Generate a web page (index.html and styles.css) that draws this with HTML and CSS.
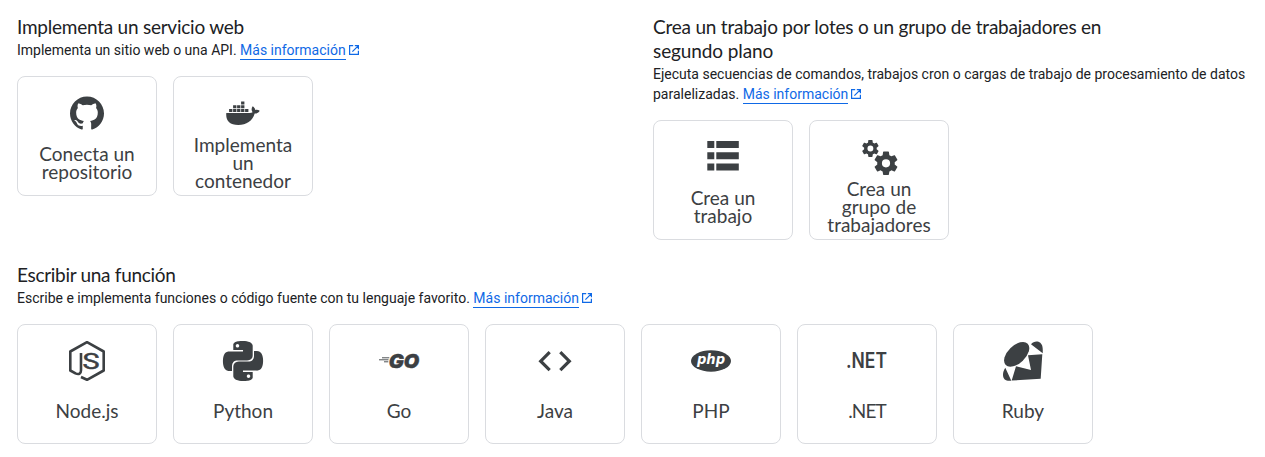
FILE: index.html
```
<!DOCTYPE html>
<html lang="es">
<head>
<meta charset="utf-8">
<title>Cloud Run</title>
<link rel="stylesheet" href="styles.css">
</head>
<body>
<svg class="defs" width="0" height="0">
  <symbol id="open" viewBox="0 0 10 10"><path d="M4.2.6H.6V9.4H9.4V5.8M5.8.6H9.4V4.2M9.2.8 3.4 6.6" fill="none" stroke="currentColor" stroke-width="1.2"/></symbol>
</svg>
<main class="page">
  <div class="columns">
    <section>
      <h2 class="heading"><span class="h-web">Implementa un servicio web</span></h2>
      <p class="text">Implementa un sitio web o una API. <a class="link" href="#">Más información</a><svg class="open"><use href="#open"/></svg></p>
      <div class="cards">
        <div class="card">
          <div class="icon"><svg width="34" height="34" viewBox="0 0 24 24"><path d="M12 .297c-6.63 0-12 5.373-12 12 0 5.303 3.438 9.8 8.205 11.385.6.113.82-.258.82-.577 0-.285-.01-1.04-.015-2.04-3.338.724-4.042-1.61-4.042-1.61C4.422 18.07 3.633 17.7 3.633 17.7c-1.087-.744.084-.729.084-.729 1.205.084 1.838 1.236 1.838 1.236 1.07 1.835 2.809 1.305 3.495.998.108-.776.417-1.305.76-1.605-2.665-.3-5.466-1.332-5.466-5.93 0-1.31.465-2.38 1.235-3.22-.135-.303-.54-1.523.105-3.176 0 0 1.005-.322 3.3 1.23.96-.267 1.98-.399 3-.405 1.02.006 2.04.138 3 .405 2.28-1.552 3.285-1.23 3.285-1.23.645 1.653.24 2.873.12 3.176.765.84 1.23 1.91 1.23 3.22 0 4.61-2.805 5.625-5.475 5.92.42.36.81 1.096.81 2.22 0 1.606-.015 2.896-.015 3.286 0 .315.21.69.825.57C20.565 22.092 24 17.592 24 12.297c0-6.627-5.373-12-12-12"/></svg></div>
          <div class="label">Conecta un<br>repositorio</div>
        </div>
        <div class="card">
          <div class="icon"><svg width="34" height="24" viewBox="0 0 34 24"><path d="M3.1 8h3.300v3h-3.300zM7.1 8h3.300v3h-3.300zM11.1 8h3.300v3h-3.300zM15.1 8h3.300v3h-3.300zM19.1 8h3.300v3h-3.300zM7.1 4.2h3.300v3h-3.300zM11.1 4.2h3.300v3h-3.300zM15.1 4.2h3.300v3h-3.300zM15.1.5h3.300v3h-3.300z"/><path d="M.3 12H23.8c1.2 0 2-.2 2.8-.7-1.5-2-1.2-4.4.1-6 1.5 1 2.3 2.1 2.6 3.7 1.600-.3 3.200-.1 4.400.7-.8 1.900-2.500 2.800-5 2.800C26.400 20 20.500 23.900 12.300 23.900 3.400 23.900-.4 19.500.3 12z"/></svg></div>
          <div class="label">Implementa<br>un<br>contenedor</div>
        </div>
      </div>
    </section>
    <section>
      <h2 class="heading"><span class="h-job">Crea un trabajo por lotes o un grupo de trabajadores en</span><br><span class="h-plan">segundo plano</span></h2>
      <p class="text">Ejecuta secuencias de comandos, trabajos cron o cargas de trabajo de procesamiento de datos paralelizadas. <a class="link" href="#">Más información</a><svg class="open"><use href="#open"/></svg></p>
      <div class="cards">
        <div class="card">
          <div class="icon"><svg width="40" height="40" viewBox="0 0 40 40"><path d="M4.300 4h7v7h-7zM13.300 4h22.500v7H13.300zM4.300 15.300h7v7h-7zM13.300 15.300h22.500v7H13.300zM4.300 26.500h7v7h-7zM13.300 26.500h22.500v7H13.300z"/></svg></div>
          <div class="label">Crea un<br>trabajo</div>
        </div>
        <div class="card">
          <div class="icon"><svg width="40" height="40" viewBox="0 0 40 40"><defs><path id="gear" d="M7.430.980c.040-.320.070-.640.070-.980s-.030-.660-.070-.980l2.110-1.650c.190-.150.240-.420.120-.640l-2-3.460c-.120-.220-.390-.300-.610-.220l-2.490 1c-.520-.400-1.080-.730-1.690-.980l-.380-2.650C2.460-9.820 2.250-10 2-10h-4c-.250 0-.460.180-.490.420l-.380 2.650c-.610.250-1.170.590-1.690.980l-2.490-1c-.230-.090-.490 0-.610.220l-2 3.460c-.130.220-.070.490.120.640l2.110 1.650c-.040.320-.070.650-.070.980s.030.660.070.980l-2.110 1.650c-.190.150-.240.420-.120.640l2 3.460c.120.220.390.300.610.220l2.490-1c.520.400 1.080.730 1.690.980l.380 2.650c.030.240.240.420.490.420h4c.250 0 .460-.180.490-.420l.380-2.650c.610-.250 1.170-.590 1.690-.980l2.490 1c.230.090.490 0 .610-.220l2-3.460c.120-.220.070-.490-.120-.640L7.430.980zM0 3.500A3.500 3.500 0 1 1 0-3.500 3.500 3.500 0 0 1 0 3.500z"/></defs><use href="#gear" transform="translate(11.400 11.500) scale(.84)"/><use href="#gear" transform="translate(27 26.300) scale(1.170)"/></svg></div>
          <div class="label">Crea un<br>grupo de<br>trabajadores</div>
        </div>
      </div>
    </section>
  </div>
  <section>
    <h2 class="heading"><span class="h-fn">Escribir una función</span></h2>
    <p class="text">Escribe e implementa funciones o código fuente con tu lenguaje favorito. <a class="link" href="#">Más información</a><svg class="open"><use href="#open"/></svg></p>
    <div class="cards">
      <div class="card">
        <div class="icon"><svg width="40" height="40" viewBox="0 0 40 40"><path d="M14 36 20 38.800 36.700 29.500V10.500L20 1.200 3.300 10.500V29.500L8.500 32.400C12 34 14 32.500 14 29.300V12" fill="none" stroke="currentColor" stroke-width="2.600" stroke-linejoin="round"/><text class="node-s" x="15.500" y="27.800" textLength="17" lengthAdjust="spacingAndGlyphs">S</text></svg></div>
        <div class="label">Node.js</div>
      </div>
      <div class="card">
        <div class="icon"><svg width="40" height="40" viewBox="0 0 24 24"><path d="M14.25.18l.9.2.73.26.59.3.45.32.34.34.25.34.16.33.1.3.04.26.02.2-.01.13V8.5l-.05.63-.13.55-.21.46-.26.38-.3.31-.33.25-.35.19-.35.14-.33.1-.3.07-.26.04-.21.02H8.77l-.69.05-.59.14-.5.22-.41.27-.33.32-.27.35-.2.36-.15.37-.1.35-.07.32-.04.27-.02.21v3.06H3.17l-.21-.03-.28-.07-.32-.12-.35-.18-.36-.26-.36-.36-.35-.46-.32-.59-.28-.73-.21-.88-.14-1.05-.05-1.23.06-1.22.16-1.04.24-.87.32-.71.36-.57.4-.44.42-.33.42-.24.4-.16.36-.1.32-.05.24-.01h.16l.06.01h8.16v-.83H6.18l-.01-2.75-.02-.37.05-.34.11-.31.17-.28.25-.26.31-.23.38-.2.44-.18.51-.15.58-.12.64-.1.71-.06.77-.04.84-.02 1.27.05zm-6.3 1.98l-.23.33-.08.41.08.41.23.34.33.22.41.09.41-.09.33-.22.23-.34.08-.41-.08-.41-.23-.33-.33-.22-.41-.09-.41.09zm13.09 3.95l.28.06.32.12.35.18.36.27.36.35.35.47.32.59.28.73.21.88.14 1.04.05 1.23-.06 1.23-.16 1.04-.24.86-.32.71-.36.57-.4.45-.42.33-.42.24-.4.16-.36.09-.32.05-.24.02-.16-.01h-8.22v.82h5.84l.01 2.76.02.36-.05.34-.11.31-.17.29-.25.25-.31.24-.38.2-.44.17-.51.15-.58.13-.64.09-.71.07-.77.04-.84.01-1.27-.04-1.07-.14-.9-.2-.73-.25-.59-.3-.45-.33-.34-.34-.25-.34-.16-.33-.1-.3-.04-.25-.02-.2.01-.13v-5.34l.05-.64.13-.54.21-.46.26-.38.3-.32.33-.24.35-.2.35-.14.33-.1.3-.06.26-.04.21-.02.13-.01h5.84l.69-.05.59-.14.5-.21.41-.28.33-.32.27-.35.2-.36.15-.36.1-.35.07-.32.04-.28.02-.21V6.07h2.09l.14.01zm-6.47 14.25l-.23.33-.08.41.08.41.23.33.33.23.41.08.41-.08.33-.23.23-.33.08-.41-.08-.41-.23-.33-.33-.23-.41-.08-.41.08z"/></svg></div>
        <div class="label">Python</div>
      </div>
      <div class="card">
        <div class="icon"><svg width="40" height="40" viewBox="0 0 40 40"><path d="M3 16.800h7.300M0 18.800h9.500M5 20.800h4.300" stroke="currentColor" stroke-width=".9"/><text class="go" x="9.800" y="27" textLength="30.500" lengthAdjust="spacingAndGlyphs">GO</text></svg></div>
        <div class="label">Go</div>
      </div>
      <div class="card">
        <div class="icon"><svg width="40" height="40" viewBox="0 0 40 40"><path d="M14.700 11.200 5.700 20.200 14.700 29.200M25.300 11.200 34.300 20.200 25.300 29.200" fill="none" stroke="currentColor" stroke-width="3.200"/></svg></div>
        <div class="label">Java</div>
      </div>
      <div class="card">
        <div class="icon"><svg width="40" height="40" viewBox="0 0 40 40"><ellipse cx="20" cy="20" rx="20" ry="10.700"/><text class="php" x="6" y="23.200" textLength="28" lengthAdjust="spacingAndGlyphs">php</text></svg></div>
        <div class="label">PHP</div>
      </div>
      <div class="card">
        <div class="icon"><svg width="42" height="40" viewBox="0 0 42 40"><text class="net" x="0" y="27.300" textLength="41" lengthAdjust="spacingAndGlyphs">.NET</text></svg></div>
        <div class="label label-net">.NET</div>
      </div>
      <div class="card">
        <div class="icon"><svg width="40" height="40" viewBox="0 0 40 40"><ellipse cx="13.700" cy="13.300" rx="15.300" ry="8.800" transform="rotate(-44 13.700 13.300)"/><path d="M28 3.200C30.500.2 34.500-.6 37.300 1.800 39.600 3.800 40 7 39.700 12.300ZM39.300 13.300 37.700 37.700 8.700 39.600 13 25.300 28 29 25 14.300ZM2.300 26.700 8.300 39.700C3.500 40.500 0 38.500 0 34 0 31 .8 29 2.300 26.700Z"/></svg></div>
        <div class="label">Ruby</div>
      </div>
    </div>
  </section>
</main>
</body>
</html>
```
FILE: styles.css
```
body {
  margin: 0;
  background: #fff;
  color: #202124;
  font-family: Roboto, "Liberation Sans", sans-serif;
}
.defs { position: absolute; }
.page {
  display: flex;
  flex-direction: column;
  gap: 24px;
  padding: 16px 17px;
}
.columns {
  display: grid;
  grid-template-columns: 620px 596px;
  column-gap: 16px;
}
.heading {
  box-sizing: border-box;
  margin: -1px 0 1px;
  font: 400 19px/24px Lato, sans-serif;
  white-space: nowrap;
}
.h-web { letter-spacing: -.24px; }
.h-job { letter-spacing: -.22px; }
.h-plan { letter-spacing: -.1px; }
.h-fn { letter-spacing: -.3px; }
.text {
  margin: 0;
  font-size: 14px;
  line-height: 20px;
}
.link {
  color: #0f69e6;
  text-decoration: none;
  border-bottom: 1px solid #0f69e6;
  padding-bottom: 1px;
}
.open {
  width: 10px;
  height: 10px;
  margin-left: 3px;
  color: #0f69e6;
}
.cards {
  display: flex;
  gap: 16px;
  margin-top: 16px;
}
.card {
  box-sizing: border-box;
  width: 140px;
  height: 120px;
  padding-top: 16px;
  border: 1px solid #dadce0;
  border-radius: 8px;
  color: #3c4043;
}
.icon {
  display: flex;
  height: 40px;
  align-items: center;
  justify-content: center;
}
.icon svg { fill: currentColor; overflow: visible; }
.label {
  display: flex;
  height: 36px;
  margin-top: 12px;
  align-items: center;
  justify-content: center;
  text-align: center;
  font: 400 19px/18px Lato, sans-serif;
}
.label-net { letter-spacing: -.9px; }
.node-s { font: 400 22px Roboto, sans-serif; stroke: currentColor; stroke-width: .5px; }
.go { font: italic 900 19px Inter, sans-serif; stroke: currentColor; stroke-width: .4px; }
.php { font: italic 700 14px "DejaVu Sans", sans-serif; fill: #fff; }
.net { font: 600 21px Inter, sans-serif; }
```
